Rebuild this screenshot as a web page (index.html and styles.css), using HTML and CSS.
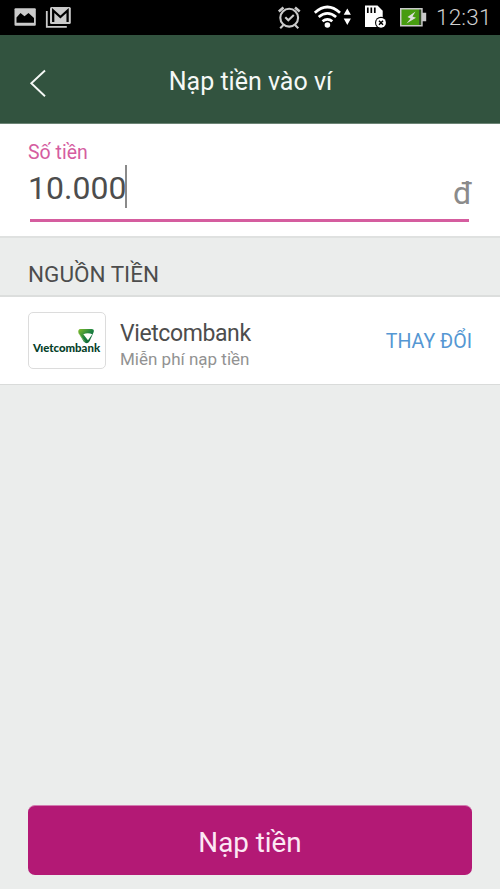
FILE: index.html
```html
<!DOCTYPE html>
<html lang="vi">
<head>
<meta charset="utf-8">
<meta name="viewport" content="width=device-width, initial-scale=1">
<title>Nạp tiền vào ví</title>
<link rel="stylesheet" href="styles.css">
</head>
<body>
<div class="status">
  <svg class="status-icons" width="80" height="35" viewBox="0 0 80 35">
    <rect x="14.500" y="8.300" width="21.300" height="17.500" rx="1" fill="#cbcbcb"/>
    <path d="M16.500 22.700v-5.200l4-4.500 4 3.200 4-3.200 5.500 5v4.700z" fill="#000"/>
    <path d="M46.800 11v15.800h20" fill="none" stroke="#cbcbcb" stroke-width="1.800"/>
    <rect x="50" y="7" width="20.800" height="17" rx="1.500" fill="#cbcbcb"/>
    <path d="M53.200 22V10.500l7.200 6.500 7.200-6.500V22" fill="none" stroke="#000" stroke-width="2.300"/>
  </svg>
  <div class="status-right">
    <svg width="156" height="35" viewBox="274 0 156 35">
      <g fill="none" stroke="#cbcbcb" stroke-width="2.100">
        <circle cx="289.200" cy="17.700" r="8.900"/>
        <path d="M285.300 17.300l3 3 5.500-5.200M283.500 25l-3.300 3.300M295 25l3.300 3.300"/>
        <path d="M278.800 11.500l4.700-4M299.700 11.500l-4.700-4" stroke-width="2.600"/>
      </g>
      <g fill="none" stroke="#fff" stroke-width="2.700">
        <path d="M314.800 12.700q12.600-11.400 25.200 0M318.700 17.100q8.700-7.500 17.400 0M322.500 21.300q4.900-4 9.800 0"/>
      </g>
      <circle cx="327.400" cy="25" r="2.800" fill="#fff"/>
      <path d="M343.700 14.700l3.600-6.200 3.600 6.200zM343.700 18.500h7.200l-3.600 6.500z" fill="#fff"/>
      <path d="M365 5.500h12.500l5.200 5.200V27H365z" fill="#fff"/>
      <path d="M367.800 7.500v5.500M371.300 7.500v5.500M374.800 7.500v5.500" stroke="#000" stroke-width="1.700"/>
      <circle cx="381" cy="22.800" r="6" fill="#000"/>
      <circle cx="381" cy="22.800" r="4.900" fill="#fff"/>
      <path d="M379 20.800l4 4M383 20.800l-4 4" stroke="#000" stroke-width="1.500"/>
      <path d="M400 8h22.700v4.800h3.500v8.400h-3.500V26.500H400z" fill="#c9c9c9"/>
      <rect x="401.500" y="9.500" width="17.500" height="15.500" fill="#479c10"/>
      <rect x="419" y="9.500" width="2.200" height="15.500" fill="#37512a"/>
      <path d="M415.500 11.500l-8 5.500 3 1.500-4 5 9.500-5.700-3.500-1.300z" fill="#ddd"/>
    </svg>
    <span class="clock">12:31</span>
  </div>
</div>
<header class="header">
  <svg class="back" width="20" height="30" viewBox="0 0 20 30"><path d="M17 2.500L3.300 15.300 17 28.200" fill="none" stroke="#f5f8f6" stroke-width="1.900"/></svg>
  <h1 class="title">Nạp tiền vào ví</h1>
</header>
<section class="amount">
  <label class="amount-label">Số tiền</label>
  <div class="amount-row">
    <span class="amount-value">10.000</span><span class="caret"></span>
    <span class="currency">đ</span>
  </div>
</section>
<h2 class="section-title">NGUỒN TIỀN</h2>
<section class="source">
  <div class="logo">
    <svg width="76" height="55" viewBox="29 313 76 55">
      <defs>
        <linearGradient id="g" x1="0" y1="0" x2="1" y2="1"><stop offset="0" stop-color="#84bd2c"/><stop offset=".5" stop-color="#1d8242"/><stop offset="1" stop-color="#02572e"/></linearGradient>
      </defs>
      <path d="M80.500 329h11q3 0 2.200 3l-4 9q-2.700 4.300-6 .5l-5.200-8.500q-1-3.700 2-4z" fill="url(#g)"/>
      <path d="M83.300 334.200q4.500-1.700 9 0l-4.300 6z" fill="#fff"/>
      <path d="M78.500 333l6.500 8.800" stroke="#b1d86f" stroke-width=".5"/>
      <text class="logo-text" x="32.900" y="352.300" textLength="67.200" lengthAdjust="spacingAndGlyphs">Vıetcombank</text>
    </svg>
  </div>
  <div class="source-info">
    <div class="source-name">Vietcombank</div>
    <div class="source-note">Miễn phí nạp tiền</div>
  </div>
  <a class="change">THAY ĐỔI</a>
</section>
<button class="submit">Nạp tiền</button>
</body>
</html>
```

FILE: styles.css
```css
* { box-sizing: border-box; }
body {
  margin: 0;
  width: 500px;
  height: 889px;
  overflow: hidden;
  display: flex;
  flex-direction: column;
  background: #ebedec;
  font-family: Roboto, "Noto Sans", sans-serif;
  color: #4d4d4d;
}
svg { display: block; flex: none; overflow: visible; }
.status {
  height: 35px;
  flex: none;
  background: #000;
  display: flex;
  justify-content: space-between;
}
.status-right { display: flex; width: 226px; }
.clock {
  margin-left: 6px;
  line-height: 35px;
  font-size: 22.5px;
  font-weight: 300;
  letter-spacing: 0.2px;
  color: #d0d0d0;
}
.header {
  height: 89px;
  flex: none;
  display: grid;
  grid-template-columns: 50px 1fr 50px;
  align-items: center;
  background: #32533f;
  border-bottom: 1px solid #6c8475;
}
.back { margin: 8px 0 0 28px; }
.title {
  margin: 5px 0 0 1px;
  text-align: center;
  font-size: 25px;
  line-height: 32px;
  font-weight: 400;
  color: #f5f8f6;
}
.amount {
  height: 114px;
  flex: none;
  padding: 16px 28px 0;
  background: #fff;
  border-bottom: 2px solid #dfe1e0;
}
.amount-label {
  display: block;
  height: 24px;
  line-height: 25px;
  font-size: 19.5px;
  color: #d55d9f;
}
.amount-row {
  display: flex;
  height: 58px;
  margin: 0 3px 0 2px;
  border-bottom: 3px solid #d55d9f;
}
.amount-value { width: 97px; margin-left: -2px; line-height: 48px; font-size: 32px; white-space: nowrap; }
.caret { width: 2px; height: 43px; margin-top: 1px; background: #8a8a8a; }
.currency { margin: 5px -3px 0 auto; line-height: 48px; font-size: 32px; color: #8b8b8b; }
.section-title {
  height: 58px;
  flex: none;
  margin: 0;
  padding: 20px 28px 0;
  line-height: 32px;
  font-size: 22.500px;
  font-weight: 400;
}
.source {
  height: 90px;
  flex: none;
  display: flex;
  padding: 16px 28px 0;
  margin-top: -1px;
  background: #fff;
  border-top: 2px solid #dcdedd;
  border-bottom: 1px solid #d9dbda;
}
.logo {
  width: 78px;
  height: 57px;
  margin-top: -1px;
  border: 1px solid #dcdcdc;
  border-radius: 5px;
}
.logo-text { font: 900 11.3px Lato, sans-serif; fill: #073f2a; }
.source-info { margin: 6px 0 0 14px; }
.source-name { line-height: 29px; font-size: 23px; letter-spacing: -0.4px; }
.source-note { line-height: 22px; font-size: 17px; color: #929292; }
.change { margin: 13px 0 0 auto; line-height: 32px; font-size: 19.6px; color: #5597d3; }
.submit {
  height: 70px;
  margin: auto 28px 14px;
  padding: 3px 0 0;
  border: 0;
  border-top: 1px solid #d27bb0;
  border-radius: 7px;
  background: #b31975;
  color: #fce8f4;
  font: 400 27.8px Roboto, "Noto Sans", sans-serif;
}
```
